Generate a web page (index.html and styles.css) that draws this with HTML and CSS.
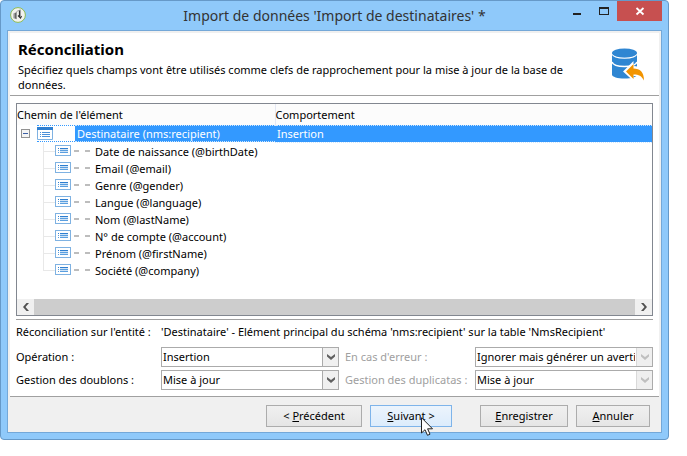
FILE: index.html
```html
<!DOCTYPE html>
<html lang="fr">
<head>
<meta charset="utf-8">
<title>Import de données</title>
<link rel="stylesheet" href="styles.css">
</head>
<body>
<svg class="defs" width="0" height="0" aria-hidden="true">
  <symbol id="field" viewBox="0 0 16 12">
    <rect x="0.5" y="0.5" width="15" height="10" fill="#fff" stroke="#7fb2e2"/>
    <path d="M3 3.5h1M5 3.5h8" stroke="#2f7fd0"/>
    <path d="M5 4.500h8M5 6.500h8" stroke="#cfe3f6"/>
    <path d="M3 5.5h1M3 7.5h1M5 5.5h8M5 7.5h8" stroke="#5b9fdf"/>
  </symbol>
  <symbol id="chevron" viewBox="0 0 8 6">
    <path d="M0 0L4 3L8 0V2.5L4 6L0 2.5Z" fill="currentColor"/>
  </symbol>
</svg>
<div class="window">
  <header class="titlebar">
    <svg class="app-icon" viewBox="0 0 16 16" aria-hidden="true">
      <circle cx="8" cy="8" r="7.4" fill="#f2f2ee" stroke="#8dbb52"/>
      <path d="M3.400 6.600L7 4.800V12.200L3.400 11.200Z" fill="#9a9a9a"/>
      <path d="M5.500 6v5.500" stroke="#666"/>
      <path d="M6.500 4.500L10.500 2.800V9" fill="none" stroke="#aaa"/>
      <path d="M9.500 3.5V9.5M8 8.5L10.5 11L11.5 9" fill="none" stroke="#333" stroke-width="1.2"/>
    </svg>
    <h1 class="caption">Import de données 'Import de destinataires' *</h1>
    <div class="controls">
      <button class="control" type="button" aria-label="Réduire"><svg width="10" height="10" viewBox="0 0 10 10"><path d="M1 7h8v2H1z" fill="#222"/></svg></button>
      <button class="control" type="button" aria-label="Agrandir"><svg width="10" height="10" viewBox="0 0 10 10"><path d="M0 1h10v8H0zM1 3v5h8V3z" fill="#222" fill-rule="evenodd"/></svg></button>
      <button class="control close" type="button" aria-label="Fermer"><svg width="10" height="10" viewBox="0 0 10 10"><path d="M1.5 2L8.5 8.5M8.5 2L1.5 8.5" stroke="#fff" stroke-width="1.8"/></svg></button>
    </div>
  </header>
  <main class="client">
    <div class="page">
      <section class="intro">
        <div class="intro-text">
          <h2>Réconciliation</h2>
          <p>Spécifiez quels champs vont être utilisés comme clefs de rapprochement pour la mise à jour de la base de données.</p>
        </div>
        <svg class="database" viewBox="0 0 34 34" aria-hidden="true">
          <path d="M1 5V26.500C1 29 6.500 30.500 13.500 30.500S26 29 26 26.500V5Z" fill="#2f86d2"/>
          <path d="M1 5.500C3 11.500 24 11.500 26 5.500M1 14C3 20 24 20 26 14" fill="none" stroke="#fff" stroke-width="1.500"/>
          <ellipse cx="13.500" cy="5" rx="12.500" ry="4.500" fill="#2f86d2"/>
          <path d="M12 23.500L22.500 13V18C30 18 34 23 34 33H31C30 28.500 27 27.500 22.500 28V33Z" fill="#fff"/>
          <path d="M15 23.500L22.500 16V20.500C29 20.500 33 24 33 32.500C30.500 28 28 26.500 22.500 26.500V31Z" fill="#f29400"/>
        </svg>
      </section>
      <section class="body">
        <div class="listbox">
          <table class="tree">
            <colgroup><col class="path-col"><col></colgroup>
            <thead><tr><th>Chemin de l'élément</th><th>Comportement</th></tr></thead>
            <tbody>
              <tr class="root">
                <td><div class="root-cell"><button class="toggle" type="button" aria-label="Replier"></button><span class="root-icon"><svg width="16" height="13" viewBox="0 0 16 13" aria-hidden="true"><path d="M0.500 1V12.500H15.500V1" fill="#fff" stroke="#7fb2e2"/><path d="M0 0h16v3H0z" fill="#2f7fd0"/><path d="M3 5.500h1M3 7.500h1M3 9.500h1M5 5.500h8M5 7.500h8M5 9.500h8" stroke="#4a90d9"/></svg></span><span class="root-name">Destinataire (nms:recipient)</span></div></td>
                <td class="behaviour">Insertion</td>
              </tr>
              <tr><td colspan="2"><div class="leaf"><svg class="field"><use href="#field"/></svg><i></i><i></i><span>Date de naissance (@birthDate)</span></div></td></tr>
              <tr><td colspan="2"><div class="leaf"><svg class="field"><use href="#field"/></svg><i></i><i></i><span>Email (@email)</span></div></td></tr>
              <tr><td colspan="2"><div class="leaf"><svg class="field"><use href="#field"/></svg><i></i><i></i><span>Genre (@gender)</span></div></td></tr>
              <tr><td colspan="2"><div class="leaf"><svg class="field"><use href="#field"/></svg><i></i><i></i><span>Langue (@language)</span></div></td></tr>
              <tr><td colspan="2"><div class="leaf"><svg class="field"><use href="#field"/></svg><i></i><i></i><span>Nom (@lastName)</span></div></td></tr>
              <tr><td colspan="2"><div class="leaf"><svg class="field"><use href="#field"/></svg><i></i><i></i><span>N° de compte (@account)</span></div></td></tr>
              <tr><td colspan="2"><div class="leaf"><svg class="field"><use href="#field"/></svg><i></i><i></i><span>Prénom (@firstName)</span></div></td></tr>
              <tr><td colspan="2"><div class="leaf last"><svg class="field"><use href="#field"/></svg><i></i><i></i><span>Société (@company)</span></div></td></tr>
            </tbody>
          </table>
          <div class="scrollbar">
            <button type="button" aria-label="Défiler à gauche"><svg width="6" height="8" viewBox="0 0 6 8"><path d="M6 0L2.500 4L6 8H3.500L0 4L3.500 0Z" fill="#505050"/></svg></button>
            <div class="thumb"></div>
            <button type="button" aria-label="Défiler à droite"><svg width="6" height="8" viewBox="0 0 6 8"><path d="M0 0L3.500 4L0 8H2.500L6 4L2.500 0Z" fill="#505050"/></svg></button>
          </div>
        </div>
        <div class="details">
          <div class="entity"><span>Réconciliation sur l'entité :</span><span>'Destinataire' - Elément principal du schéma 'nms:recipient' sur la table 'NmsRecipient'</span></div>
          <div class="fields">
            <label for="operation">Opération :</label>
            <div class="combo"><select id="operation"><option>Insertion</option></select><svg class="chevron"><use href="#chevron"/></svg></div>
            <label class="off" for="error">En cas d'erreur :</label>
            <div class="combo off"><select id="error" disabled><option>Ignorer mais générer un avertissement</option></select><svg class="chevron"><use href="#chevron"/></svg></div>
            <label for="doubles">Gestion des doublons :</label>
            <div class="combo"><select id="doubles"><option>Mise à jour</option></select><svg class="chevron"><use href="#chevron"/></svg></div>
            <label class="off" for="duplicates">Gestion des duplicatas :</label>
            <div class="combo off"><select id="duplicates" disabled><option>Mise à jour</option></select><svg class="chevron"><use href="#chevron"/></svg></div>
          </div>
        </div>
      </section>
    </div>
    <footer class="actions">
      <button class="btn wide" type="button">&lt; <u>P</u>récédent</button>
      <button class="btn next" type="button"><u>S</u>uivant &gt;<svg class="pointer" width="12" height="19" viewBox="0 0 12 19" aria-hidden="true"><path d="M0.500 0.700V16L4 12.700L6.500 18.300L9 17.200L6.600 11.800H11.500Z" fill="#fff" stroke="#222"/></svg></button>
      <button class="btn save" type="button"><u>E</u>nregistrer</button>
      <button class="btn cancel" type="button"><u>A</u>nnuler</button>
    </footer>
  </main>
</div>
</body>
</html>
```
FILE: styles.css
```css
* {
  box-sizing: border-box;
}

body {
  margin: 0;
  background: #fff;
  color: #000;
  font: 11px/15px "Noto Sans", "Open Sans", sans-serif;
}

button,
select {
  margin: 0;
  padding: 0;
  border: 0;
  font: inherit;
  color: inherit;
}

h1, h2, p {
  margin: 0;
}

.defs {
  position: absolute;
}

.window {
  margin: 0 18px 16px 0;
  padding: 0 6px 6px;
  border: 1px solid #6699c8;
  border-radius: 4px;
  background: #8fc9fa;
}

.titlebar {
  display: grid;
  grid-template-columns: 100px 1fr 100px;
  height: 29px;
}

.app-icon {
  width: 16px;
  height: 16px;
  margin: 6px 0 0 3px;
}

.caption {
  align-self: center;
  text-align: center;
  white-space: nowrap;
  font-size: 14px;
  line-height: 20px;
  font-weight: 400;
  color: #333;
}

.controls {
  display: flex;
  justify-content: flex-end;
}

.control {
  display: flex;
  align-items: center;
  justify-content: center;
  width: 27px;
  height: 20px;
  background: none;
}

.close {
  width: 45px;
  background: #c75050;
}

.client {
  border: 1px solid #74a8d8;
  background: #f0f0f0;
}

.page {
  margin: 2px 2px 0;
  background: #fff;
}

.intro {
  display: flex;
  justify-content: space-between;
  height: 63px;
  padding: 7px 14px 0 8px;
  border-bottom: 1px solid #a0a0a0;
}

.intro-text {
  flex: 1;
  max-width: 570px;
}

.intro h2 {
  margin-bottom: 4px;
  font-size: 15px;
  line-height: 18px;
}

.database {
  width: 34px;
  height: 34px;
  margin-top: 8px;
}

.body {
  padding: 7px 6px 6px 6px;
}

.listbox {
  border: 1px solid #828790;
}

.tree {
  width: 100%;
  margin-bottom: 20px;
  border-collapse: collapse;
  table-layout: fixed;
}

.path-col {
  width: 258px;
}

.tree th {
  height: 21px;
  padding: 0;
  background: #fcfcfc;
  font-weight: 400;
  text-align: left;
}

.tree th + th {
  border-left: 1px solid #e4e8f4;
}

.tree td {
  height: 17px;
  padding: 0;
  white-space: nowrap;
}

.root-cell {
  display: flex;
  align-items: center;
  height: 17px;
}

.toggle {
  width: 9px;
  height: 9px;
  margin: 0 7px 0 4px;
  border: 1px solid #919191;
  background: linear-gradient(#3b5fa5, #3b5fa5) center / 5px 1px no-repeat, #f4f4f4;
}

.root-icon {
  display: flex;
  align-items: center;
  width: 38px;
  height: 17px;
  border: dotted #3399ff;
  border-width: 1px 0;
}

.root-name,
.tree .behaviour {
  background: #3399ff;
  color: #fff;
  line-height: 15px;
  border: dotted #cce6ff;
  border-width: 1px 0;
}

.root-name {
  flex: 1;
  padding-left: 2px;
}

.tree .behaviour {
  padding-left: 2px;
}

.leaf {
  display: flex;
  align-items: center;
  gap: 5px;
  height: 17px;
  margin-left: 26px;
  background:
    linear-gradient(#e8e8e8, #e8e8e8) 0 0 / 1px 100% no-repeat,
    linear-gradient(#e8e8e8, #e8e8e8) 0 8px / 12px 1px no-repeat;
}

.leaf.last {
  background-size: 1px 8px, 12px 1px;
}

.field {
  width: 16px;
  height: 12px;
  margin: 0 -2px 0 12px;
}

.leaf i {
  width: 5px;
  height: 2px;
  background: #bdbdbd;
}

.leaf i + i {
  margin-left: 1px;
}

.scrollbar {
  display: flex;
  height: 16px;
  background: #f0f0f0;
}

.scrollbar button {
  display: flex;
  align-items: center;
  justify-content: center;
  width: 17px;
  background: none;
}

.thumb {
  flex: 1;
  background: #cdcdcd;
}

.details {
  margin-top: 3px;
  padding-top: 4px;
  border-top: 1px solid #a0a0a0;
}

.entity,
.fields {
  display: grid;
  grid-template-columns: 145px 1fr;
  white-space: nowrap;
}

.fields {
  grid-template-columns: 145px 1fr 136px 1fr;
  gap: 3px 0;
  align-items: center;
  margin-top: 8px;
}

label.off {
  padding-left: 6px;
  color: #a0a0a0;
}

.combo {
  position: relative;
  height: 20px;
}

.combo select {
  appearance: none;
  width: 100%;
  height: 20px;
  padding: 0 17px 0 1px;
  border: 1px solid #ababab;
  border-radius: 0;
  background: linear-gradient(to right, #ababab 1px, #f0f0f0 1px) right / 16px 100% no-repeat, #fff;
  color: #000;
  opacity: 1;
}

.combo.off select {
  background-image: linear-gradient(to right, #d9d9d9 1px, #efefef 1px);
}

.chevron {
  position: absolute;
  right: 4px;
  top: 7px;
  width: 8px;
  height: 6px;
  color: #606060;
  pointer-events: none;
}

.combo.off .chevron {
  color: #bfbfbf;
}

.actions {
  display: flex;
  justify-content: flex-end;
  gap: 8px;
  padding: 8px 9px 5px;
  border-top: 1px solid #a0a0a0;
  margin: 0 2px;
}

.btn {
  position: relative;
  width: 96px;
  height: 22px;
  border: 1px solid #acacac;
  background: linear-gradient(#f0f0f0, #e5e5e5);
}

.next {
  width: 82px;
  border-color: #7eb4ea;
  background: linear-gradient(#ecf4fc, #dcecfc);
}

.save {
  width: 88px;
  margin-left: 20px;
}

.cancel {
  width: 74px;
}

.pointer {
  position: absolute;
  left: 50px;
  top: 11px;
}
```
